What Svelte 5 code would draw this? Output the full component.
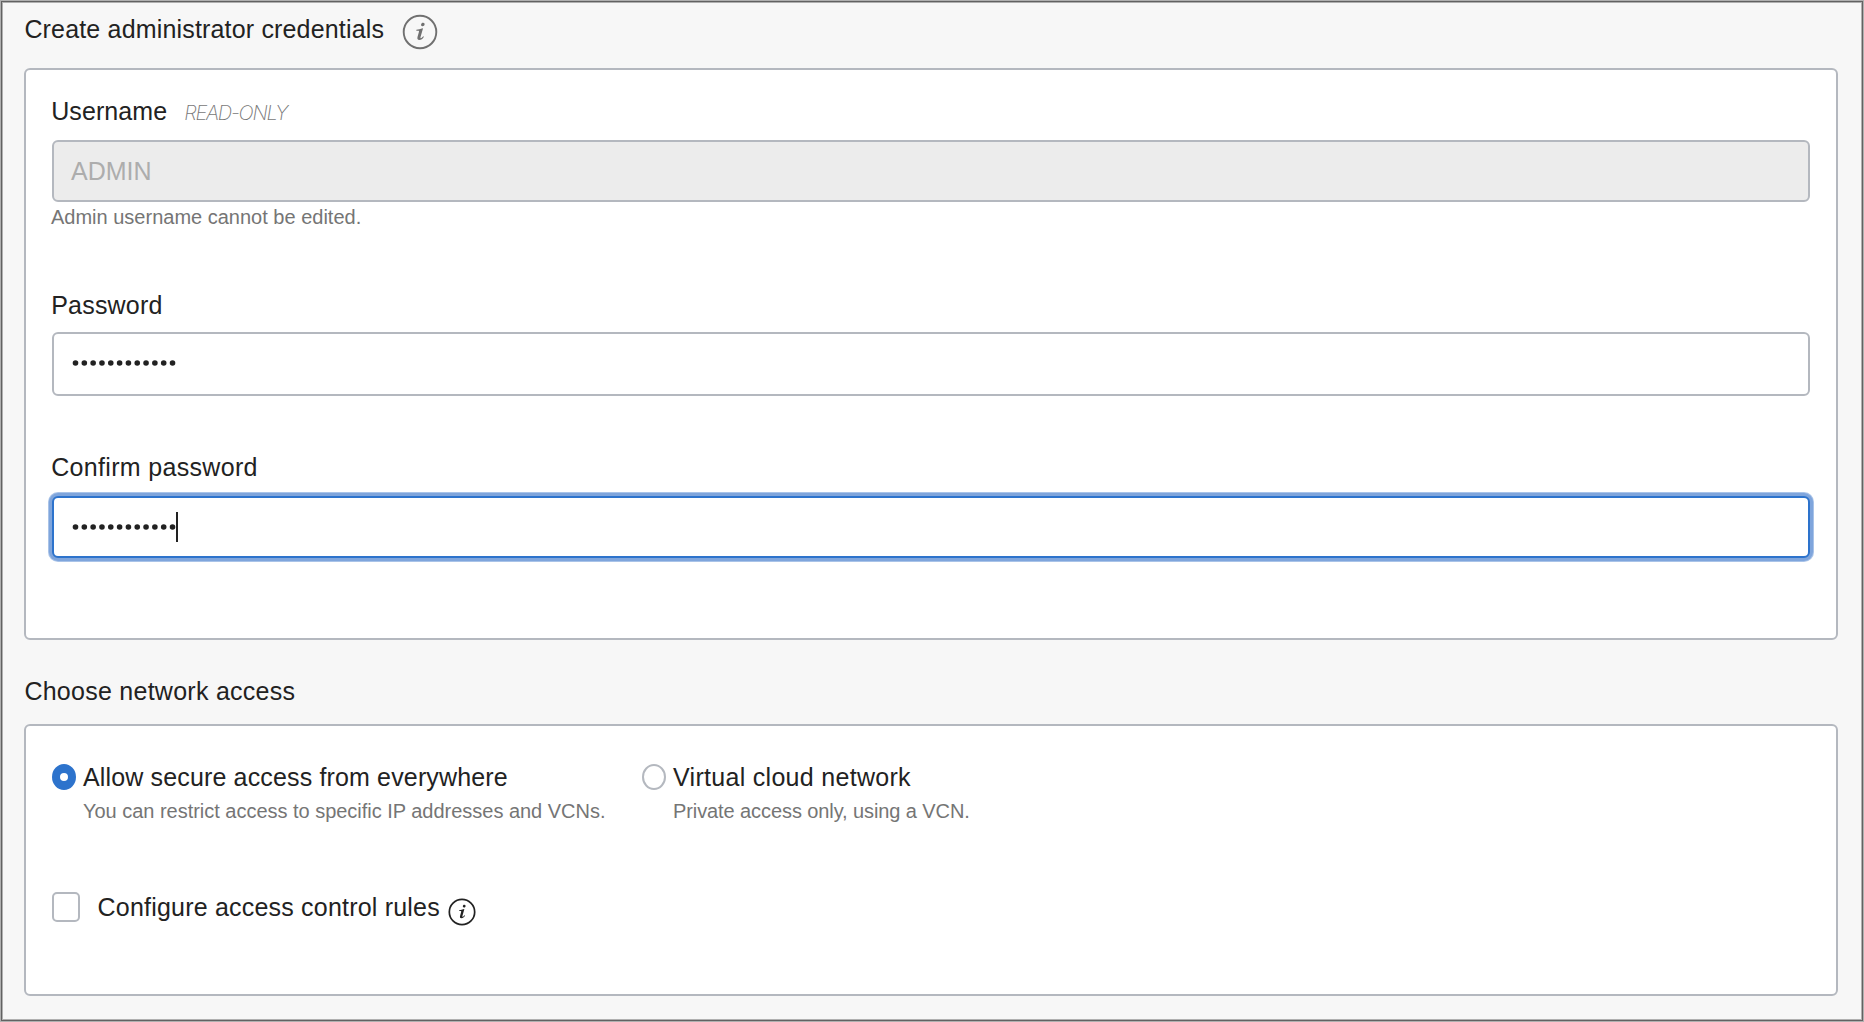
<script>
  const passwordLength = 12;
  let access = $state('everywhere');
  let configureRules = $state(false);
</script>

{#snippet info(kind)}
  <svg class="info {kind}" viewBox="0 0 36 36" aria-hidden="true">
    <circle cx="18" cy="18" r="16.3" />
    <path d="M19.1 10.400c.2-1.100 1.100-1.800 2.100-1.700 1 .1 1.600.9 1.400 1.900-.2 1-1.100 1.700-2.100 1.600-1-.1-1.600-.9-1.400-1.800z" />
    <path d="M14.400 15.700c1.900-.2 4.200-.7 6.200-1.500l.4.3-2.400 8.300c-.3 1.100-.1 1.500.3 1.400.7-.1 1.500-1 2.200-2l.8.5c-1.200 2.100-2.800 3.200-4.600 3.200-1.700 0-2.300-1.100-1.800-2.900l1.400-5.100c.2-.8.1-1.100-.6-1.100l-2-.1z" />
  </svg>
{/snippet}

{#snippet dots()}
  <svg class="dots" viewBox="0 0 106 8" aria-hidden="true">
    {#each { length: passwordLength } as _, i}
      <circle cx={4.5 + i * 8.82} cy="4" r="2.8" />
    {/each}
  </svg>
{/snippet}

<main>
  <h2 class="first">Create administrator credentials {@render info('large')}</h2>
  <section class="card credentials">
    <div class="label username">Username <em>READ-ONLY</em></div>
    <div class="field disabled">ADMIN</div>
    <p class="hint">Admin username cannot be edited.</p>
    <div class="label password">Password</div>
    <div class="field tall">{@render dots()}</div>
    <div class="label confirm">Confirm password</div>
    <div class="field focused">{@render dots()}<span class="caret"></span></div>
  </section>

  <h2 class="second">Choose network access</h2>
  <section class="card network">
    <div class="options">
      <button class="option" onclick={() => (access = 'everywhere')}>
        <span class="radio" class:checked={access === 'everywhere'}></span>
        <span class="copy">
          <span class="title">Allow secure access from everywhere</span>
          <span class="sub">You can restrict access to specific IP addresses and VCNs.</span>
        </span>
      </button>
      <button class="option vcn" onclick={() => (access = 'vcn')}>
        <span class="radio" class:checked={access === 'vcn'}></span>
        <span class="copy">
          <span class="title">Virtual cloud network</span>
          <span class="sub">Private access only, using a VCN.</span>
        </span>
      </button>
    </div>
    <button class="rules" onclick={() => (configureRules = !configureRules)}>
      <span class="checkbox" class:ticked={configureRules}></span>
      <span>Configure access control rules</span>
      {@render info('small')}
    </button>
  </section>
</main>

<style>
  :global(body) { margin: 0; }
  main, main * { box-sizing: border-box; }
  main {
    width: 1864px;
    height: 1022px;
    padding: 13px 25px 0 23px;
    border: 1px solid #b0b0b0;
    box-shadow: inset 0 0 0 1px #626262, inset 0 0 0 2px #b0b0b0;
    background: #f7f7f7;
    color: #222;
    font-family: "Liberation Sans", Arial, sans-serif;
    font-size: 25px;
    line-height: 30px;
    letter-spacing: 0.2px;
  }
  h2 { display: flex; margin: 0; font: inherit; height: 30px; padding-left: 0.4px; }
  .first { letter-spacing: 0.17px; }
  .second { margin-top: 36px; letter-spacing: 0.26px; }
  .card {
    border: 2px solid #b4b8bf;
    border-radius: 6px;
    background: #fff;
    padding: 0 26px;
  }
  .credentials { height: 572px; margin-top: 24px; padding-top: 26px; }
  .network { height: 272px; margin-top: 18px; padding-top: 38px; }
  .label { display: flex; height: 30px; margin-left: -0.8px; }
  .username { letter-spacing: 0.08px; }
  .label em {
    margin-left: 17px;
    padding-top: 1px;
    color: #777;
    font: italic 200 20px/32px Inter, sans-serif;
    letter-spacing: -1.25px;
  }
  .field {
    display: flex;
    align-items: center;
    height: 62px;
    margin-top: 14px;
    padding: 0 17px;
    border: 2px solid #b4b8bf;
    border-radius: 6px;
    background: #fff;
  }
  .disabled { background: #ececec; color: #adadad; letter-spacing: 0; }
  .tall { height: 64px; margin-top: 12px; padding-bottom: 2px; }
  .focused {
    margin-top: 14px;
    border-color: #2d73cc;
    box-shadow: 0 0 0 3px #7fa5dc, 0 0 0 4px #a9c3e8;
  }
  .hint, .sub {
    color: #757575;
    font-size: 20px;
    line-height: 24px;
    letter-spacing: 0;
  }
  .hint { margin: 3px 0 0 -1px; }
  .password { margin-top: 61px; }
  .confirm { margin-top: 56px; letter-spacing: 0.32px; }
  .dots { flex: none; width: 106px; height: 8px; fill: #222; }
  .caret { width: 2px; height: 30px; margin-left: -1px; background: #222; }
  button {
    display: flex;
    padding: 0;
    border: 0;
    background: none;
    color: inherit;
    font: inherit;
    letter-spacing: inherit;
    text-align: left;
  }
  .options { display: flex; height: 80px; }
  .option { width: 590px; align-items: flex-start; }
  .radio {
    width: 24px;
    height: 26px;
    border: 2px solid #b4b8bf;
    border-radius: 50%;
    background: #fff;
  }
  .radio.checked { border-width: 9px 8px; border-color: #2d73cc; }
  .copy { display: flex; flex-direction: column; margin: -2px 0 0 7px; }
  .title { letter-spacing: 0.15px; }
  .vcn .title { letter-spacing: 0.3px; }
  .sub { margin-top: 7px; letter-spacing: -0.02px; }
  .vcn .sub { letter-spacing: -0.09px; }
  .rules { margin-top: 48px; height: 34px; }
  .checkbox {
    width: 28px;
    height: 30px;
    margin-right: 17.6px;
    border: 2px solid #b4b8bf;
    border-radius: 5px;
    background: #fff;
  }
  .ticked { background: #2d73cc; }
  .info { flex: none; fill: none; stroke: #707070; stroke-width: 1.9; }
  .info path { fill: #707070; stroke: none; }
  .large { width: 36px; height: 36px; margin-left: 18px; }
  .small { width: 28px; height: 28px; margin: 6px 0 0 8px; stroke: #222; stroke-width: 2.2; }
  .small path { fill: #222; }
</style>
